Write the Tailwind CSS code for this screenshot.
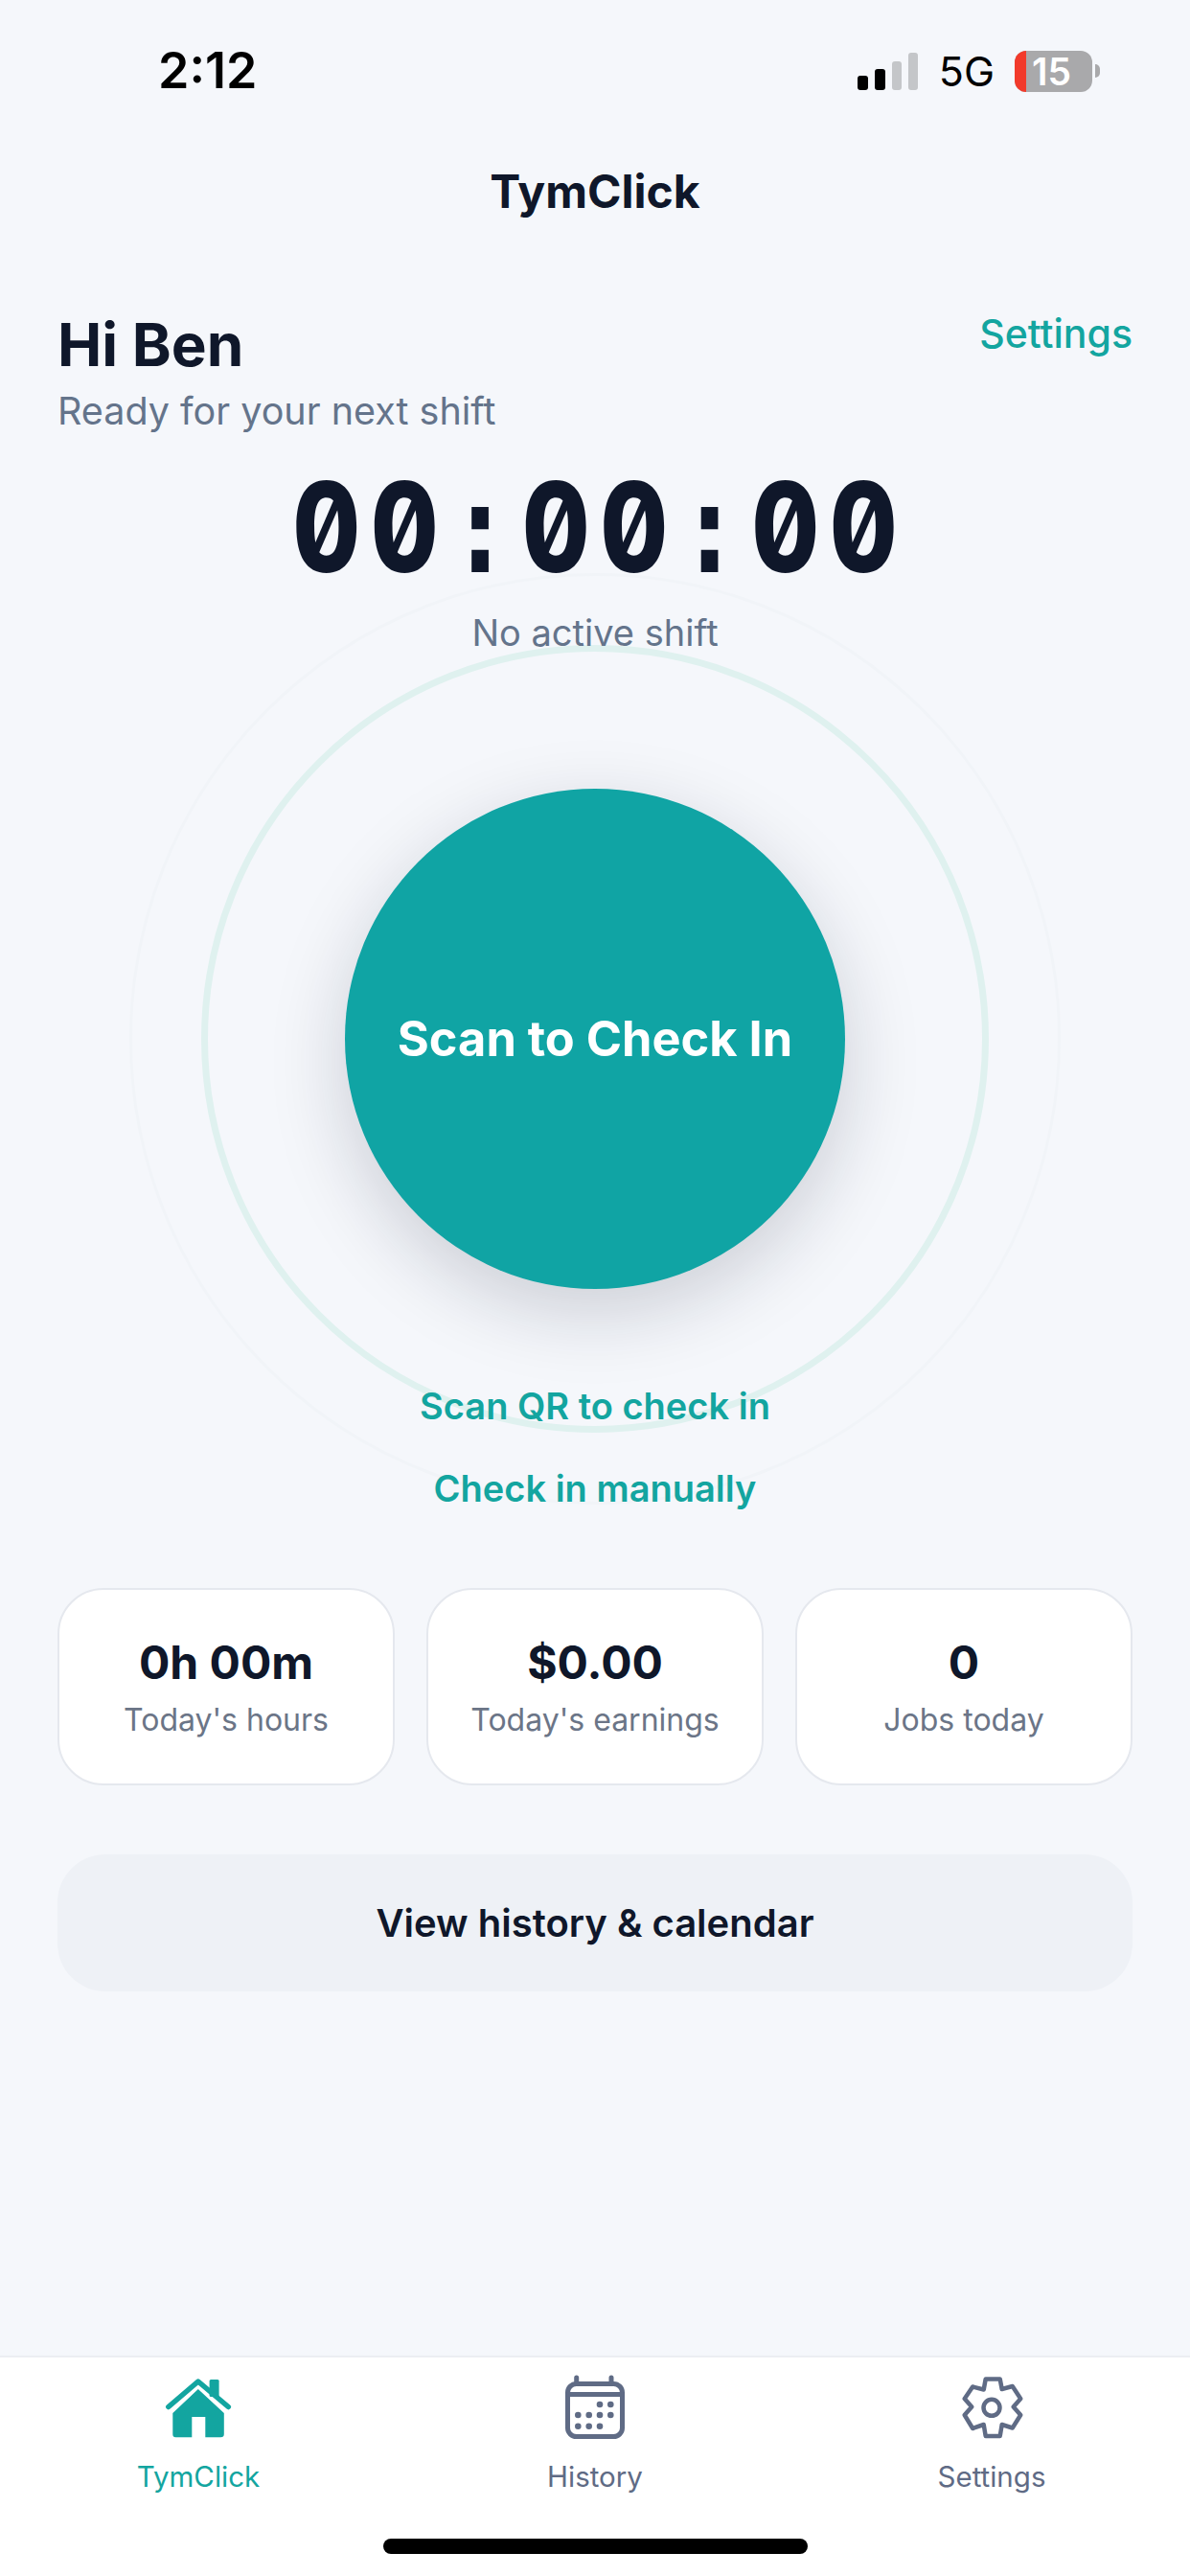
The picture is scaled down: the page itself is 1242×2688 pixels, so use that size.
<!DOCTYPE html>
<html lang="en">
<head>
    <meta charset="UTF-8">
    <meta name="viewport" content="width=device-width, initial-scale=1.0">
    <title>TymClick</title>
    <script src="https://cdn.jsdelivr.net/npm/@tailwindcss/browser@4"></script>
</head>
<body class="font-[Inter,sans-serif]">
    <div class="flex flex-col w-[1242px] h-[2688px] overflow-hidden bg-[#f5f7fb] text-[#0f172a]">

        <!-- status bar -->
        <div class="flex justify-between items-start h-[170px] pt-[46px] pl-[165px] pr-[94px]">
            <span class="text-[52px] leading-[56px] font-semibold text-black">2:12</span>
            <div class="flex items-center h-[56px]">
                <div class="flex items-end gap-[7px] h-[40px]">
                    <div class="w-[11px] h-[15px] rounded-[3px] bg-black"></div>
                    <div class="w-[11px] h-[22px] rounded-[3px] bg-black"></div>
                    <div class="w-[10px] h-[30px] rounded-[3px] bg-[#c4c6c9]"></div>
                    <div class="w-[10px] h-[39px] rounded-[3px] bg-[#c4c6c9]"></div>
                </div>
                <span class="ml-[22px] text-[43px] leading-[56px] font-normal text-black">5G</span>
                <div class="flex items-center ml-[21px] w-[81px] h-[43px] rounded-[12px] bg-[#a9a9ab]">
                    <div class="w-[12px] h-full rounded-l-[12px] bg-[#f23a2b]"></div>
                    <span class="ml-[6px] text-[39px] leading-[43px] font-semibold text-white">15</span>
                </div>
                <div class="w-[5px] h-[14px] ml-[3px] rounded-r-full bg-[#a9a9ab]"></div>
            </div>
        </div>

        <h1 class="h-[60px] text-center text-[48px] leading-[60px] font-bold">TymClick</h1>

        <!-- greeting -->
        <div class="flex justify-between items-start mt-[94px] px-[60px]">
            <div>
                <div class="text-[62px] leading-[72px] font-bold">Hi Ben</div>
                <div class="mt-[9px] text-[39.5px] leading-[48px] text-[#64748b]">Ready for your next shift</div>
            </div>
            <span class="text-[41px] leading-[48px] font-medium text-[#13a5a0]">Settings</span>
        </div>

        <!-- timer: Inter has the slashed zero, squeezed to the mono look -->
        <div class="mt-[32px] h-[130px] pl-[13px] text-center text-[130px] leading-[130px] font-extrabold tabular-nums slashed-zero tracking-[13px] scale-x-[0.84]">00<span class="font-['DejaVu_Sans_Mono',monospace]">:</span>00<span class="font-['DejaVu_Sans_Mono',monospace]">:</span>00</div>
        <div class="relative z-10 mt-[21px] text-center text-[38px] leading-[48px] text-[#64748b]">No active shift</div>

        <!-- check in button -->
        <div class="relative mt-[139px] mx-auto w-[522px] h-[522px]">
            <div class="absolute -inset-[225px] rounded-full border-[3px] border-[#f1f4f8]"></div>
            <div class="absolute -inset-[150px] rounded-full border-[7px] border-[#dff1ef]"></div>
            <button class="relative flex items-center justify-center w-full h-full rounded-full bg-[#10a4a4] text-[50.5px] font-bold text-white shadow-[0_24px_80px_rgba(15,23,42,0.18)]">Scan to Check In</button>
        </div>

        <div class="relative z-10 mt-[98px] text-center text-[38px] leading-[48px] font-semibold text-[#13a5a0]">Scan QR to check in</div>
        <div class="relative z-10 mt-[38px] text-center text-[38px] leading-[48px] font-semibold text-[#13a5a0]">Check in manually</div>

        <!-- stats -->
        <div class="grid grid-cols-3 gap-[33px] mt-[80px] px-[60px]">
            <div class="flex flex-col items-center justify-center h-[206px] rounded-[48px] border-2 border-[#e5e8ee] bg-white">
                <div class="text-[48px] leading-[60px] font-bold">0h 00m</div>
                <div class="mt-[10px] text-[32px] leading-[40px] text-[#6b7587]">Today's hours</div>
            </div>
            <div class="flex flex-col items-center justify-center h-[206px] rounded-[48px] border-2 border-[#e5e8ee] bg-white">
                <div class="text-[48px] leading-[60px] font-bold">$0.00</div>
                <div class="mt-[10px] text-[32px] leading-[40px] text-[#6b7587]">Today's earnings</div>
            </div>
            <div class="flex flex-col items-center justify-center h-[206px] rounded-[48px] border-2 border-[#e5e8ee] bg-white">
                <div class="text-[48px] leading-[60px] font-bold">0</div>
                <div class="mt-[10px] text-[32px] leading-[40px] text-[#6b7587]">Jobs today</div>
            </div>
        </div>

        <button class="mt-[72px] mx-[60px] h-[143px] rounded-[50px] bg-[#eef1f6] text-[40px] font-semibold">View history &amp; calendar</button>

        <!-- tab bar -->
        <div class="mt-auto border-t-2 border-[#eceef2] bg-white">
            <div class="grid grid-cols-3 pt-[15px]">
                <div class="flex flex-col items-center text-[#13a5a0]">
                    <svg class="w-[80px] h-[70px]" viewBox="16.7 5 80 70">
                        <rect x="68.3" y="13" width="10" height="18" rx="1.5" fill="currentColor"/>
                        <path d="M25.5 41.5 L56.5 15 L88 41.5" fill="none" stroke="currentColor" stroke-width="5.5" stroke-linecap="round" stroke-linejoin="round"/>
                        <path d="M30 48 L56.5 23 L83.5 48 V70 Q83.5 73.3 80 73.3 H64 V52 H50 V73.3 H33 Q30 73.3 30 70 Z" fill="currentColor"/>
                    </svg>
                    <span class="mt-[21px] text-[29.5px] leading-[36px]">TymClick</span>
                </div>
                <div class="flex flex-col items-center text-[#5f6b85]">
                    <svg class="w-[80px] h-[70px]" viewBox="0 0 80 70" fill="none" stroke="currentColor" stroke-width="5">
                        <rect x="11.5" y="12.5" width="57" height="55" rx="9"/>
                        <path d="M11.5 23.5 H68.5 M20.7 6 V12 M57 6 V12" stroke-linecap="round"/>
                        <g fill="currentColor" stroke="none">
                            <circle cx="45" cy="34" r="3.3"/><circle cx="56.3" cy="34" r="3.3"/>
                            <circle cx="22.3" cy="45" r="3.3"/><circle cx="33.7" cy="45" r="3.3"/><circle cx="45" cy="45" r="3.3"/><circle cx="56.3" cy="45" r="3.3"/>
                            <circle cx="22.3" cy="56.7" r="3.3"/><circle cx="33.7" cy="56.7" r="3.3"/><circle cx="45" cy="56.7" r="3.3"/>
                        </g>
                    </svg>
                    <span class="mt-[21px] text-[29.5px] leading-[36px]">History</span>
                </div>
                <div class="flex flex-col items-center text-[#5f6b85]">
                    <svg class="w-[80px] h-[70px]" viewBox="18.3 5 80 70" fill="none" stroke="currentColor" stroke-width="4.5" stroke-linejoin="round">
                        <path d="M52 12.5 H67 L69 23 L80 20 L88.5 33 L81 41.5 L88.5 50 L80 63.5 L69 60 L67 72 H52 L50 60 L38.5 64 L30 50 L37.5 41.5 L30 33 L38.5 20.5 L50 23.5 Z"/>
                        <circle cx="58.3" cy="42.3" r="8.5"/>
                    </svg>
                    <span class="mt-[21px] text-[29.5px] leading-[36px]">Settings</span>
                </div>
            </div>
            <div class="mt-[47px] mb-[23px] mx-auto w-[443px] h-[16px] rounded-full bg-black"></div>
        </div>
    </div>
</body>
</html>
